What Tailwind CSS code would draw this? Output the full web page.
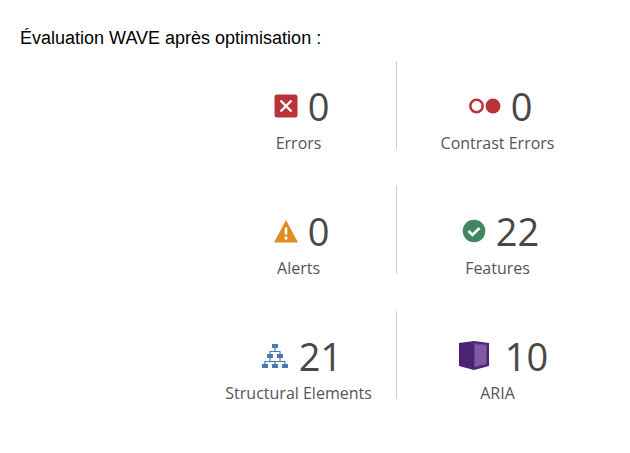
<!DOCTYPE html>
<html lang="fr">
<head>
<meta charset="utf-8">
<meta name="viewport" content="width=device-width, initial-scale=1">
<title>Évaluation WAVE</title>
<script src="https://cdn.jsdelivr.net/npm/@tailwindcss/browser@4"></script>
</head>
<body class="bg-white">
<main class="pt-6 pb-12">
  <h1 class="px-5 text-[18px] leading-7 text-black font-['Liberation_Sans',Arial,sans-serif]">Évaluation WAVE après optimisation :</h1>
  <ul class="mt-[9px] grid grid-cols-[195fr_202fr] gap-y-[37px] pl-[32%] pr-[5%] text-center text-[#484848] font-['Open_Sans',sans-serif]">
    <li class="flex h-[88px] flex-col gap-[3px] border-r border-[#cccccc] pt-[23px]">
      <div class="flex h-11 items-center justify-center gap-2.5 pl-1.5">
        <svg class="h-6 w-6" viewBox="0 0 24 24" aria-hidden="true"><rect x=".5" y=".5" width="23" height="23" rx="2.5" fill="#b93338"/><path d="M6.500 6.500l11 11M17.500 6.500l-11 11" stroke="#fff" stroke-width="2.4"/></svg>
        <span class="text-[38px] leading-11">0</span>
      </div>
      <span class="text-base leading-6 whitespace-nowrap text-[#555555]">Errors</span>
    </li>
    <li class="flex h-[88px] flex-col gap-[3px] pt-[23px]">
      <div class="flex h-11 items-center justify-center gap-2.5 pl-1.5">
        <svg class="h-6 w-8" viewBox="0 0 32 24" aria-hidden="true"><circle cx="7.500" cy="12" r="6.200" fill="#fff" stroke="#b93338" stroke-width="2.600"/><circle cx="24" cy="12" r="7.500" fill="#b93338"/></svg>
        <span class="text-[38px] leading-11">0</span>
      </div>
      <span class="text-base leading-6 whitespace-nowrap text-[#555555]">Contrast Errors</span>
    </li>
    <li class="flex h-[88px] flex-col gap-[3px] border-r border-[#cccccc] pt-[23px]">
      <div class="flex h-11 items-center justify-center gap-2.5 pl-1.5">
        <svg class="h-6 w-6" viewBox="0 0 24 24" aria-hidden="true"><path d="M12 1L24 23.500H0z" fill="#df8d20"/><path d="M10.700 8.500h2.600v7h-2.600zM10.700 17.500h2.600v3h-2.600z" fill="#fff"/></svg>
        <span class="text-[38px] leading-11">0</span>
      </div>
      <span class="text-base leading-6 whitespace-nowrap text-[#555555]">Alerts</span>
    </li>
    <li class="flex h-[88px] flex-col gap-[3px] pt-[23px]">
      <div class="flex h-11 items-center justify-center gap-2.5 pl-1.5">
        <svg class="h-6 w-6" viewBox="0 0 24 24" aria-hidden="true"><circle cx="12" cy="12" r="11.300" fill="#418562"/><path d="M6.500 12l4 4 7-7" fill="none" stroke="#fff" stroke-width="2.600"/></svg>
        <span class="text-[38px] leading-11">22</span>
      </div>
      <span class="text-base leading-6 whitespace-nowrap text-[#555555]">Features</span>
    </li>
    <li class="flex h-[88px] flex-col gap-[3px] border-r border-[#cccccc] pt-[23px]">
      <div class="flex h-11 items-center justify-center gap-2.5 pl-1.5">
        <svg class="h-6 w-7" viewBox="0 0 28 24" aria-hidden="true"><path d="M14 3v4.500M9 12V7.500h10V12M9 13v4.500M19 13v4.500M4 21v-3.500h20V21M14 17.500V21" fill="none" stroke="#4a7ab5" stroke-width="1.200"/><path d="M11 0h6v4h-6zM6 10h6v4H6zM16 10h6v4h-6zM1 20h6v4H1zM11 20h6v4h-6zM21 20h6v4h-6z" fill="#4a7ab5"/></svg>
        <span class="text-[38px] leading-11">21</span>
      </div>
      <span class="text-base leading-6 whitespace-nowrap text-[#555555]">Structural Elements</span>
    </li>
    <li class="flex h-[88px] flex-col gap-[3px] pt-[23px]">
      <div class="flex h-11 items-center justify-center gap-2.5 pl-1.5">
        <svg class="h-8 w-[42px]" viewBox="0 0 42 32" aria-hidden="true"><path d="M6 3L21 1l15 2V26l-15 4-15-4z" fill="#4b2274"/><path d="M21 3L34 4.500V24.500L21 27.500z" fill="#6c4291"/><path d="M22 4.500L33 5.500V23.500L22 26.500z" fill="#8059a2"/></svg>
        <span class="text-[38px] leading-11">10</span>
      </div>
      <span class="text-base leading-6 whitespace-nowrap text-[#555555]">ARIA</span>
    </li>
  </ul>
</main>
</body>
</html>
